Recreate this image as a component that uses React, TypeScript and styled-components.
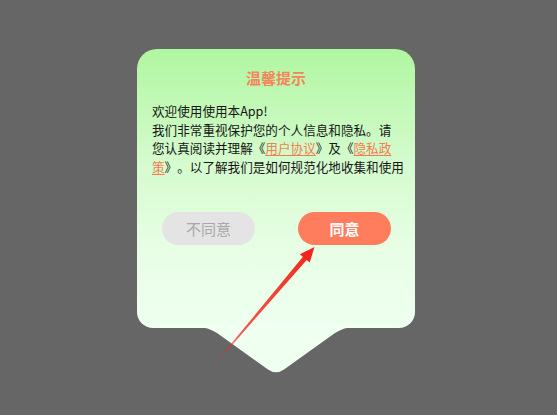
import styled, { createGlobalStyle } from 'styled-components';

const GlobalStyle = createGlobalStyle`
  html, body {
    margin: 0;
    padding: 0;
  }
  body {
    font-family: "Noto Sans CJK SC", "Noto Sans", sans-serif;
  }
`;

const Page = styled.div`
  width: 100vw;
  height: 100vh;
  background: #666666;
  padding: 49px 0 0 137px;
  box-sizing: border-box;
  overflow: hidden;
`;

const Dialog = styled.div`
  position: relative;
  width: 278px;
  display: flex;
  flex-direction: column;
`;

const Card = styled.div`
  height: 279px;
  border-radius: 20px 20px 16px 16px;
  background: linear-gradient(180deg, #b0f6a0 0%, #d4fbcd 40%, #e7fee4 70%, #effff0 100%);
  display: flex;
  flex-direction: column;
`;

const Title = styled.h2`
  margin: 19px 0 0;
  text-align: center;
  font-size: 15px;
  line-height: 20px;
  font-weight: 700;
  color: #f5855c;
`;

const Body = styled.div`
  margin-top: 14px;
  padding-left: 15px;
  font-size: 12.6px;
  line-height: 18.5px;
  color: #161616;
  text-spacing-trim: space-all;
  font-feature-settings: normal;
`;

const Line = styled.div`
  white-space: nowrap;
`;

const LinkText = styled.span`
  color: #f57c52;
  text-decoration: underline;
  text-underline-offset: 2px;
`;

const Actions = styled.div`
  margin-top: 36px;
  padding: 0 24px 0 25px;
  display: flex;
  justify-content: space-between;
`;

const Button = styled.button<{ $primary?: boolean }>`
  width: 93px;
  height: 33px;
  border: none;
  border-radius: 17px;
  padding: 0;
  font-family: inherit;
  font-size: 15px;
  font-weight: ${({ $primary }) => ($primary ? 700 : 400)};
  background: ${({ $primary }) => ($primary ? '#ff7c5d' : '#e4e4e4')};
  color: ${({ $primary }) => ($primary ? '#ffffff' : '#a8a8a8')};
`;

const Pointer = styled.svg`
  display: block;
  margin-top: -1px;
`;

const ArrowLayer = styled.svg`
  position: absolute;
  left: 0;
  top: 0;
  pointer-events: none;
`;

// red annotation arrow: tail (74.5,319) -> tip (177.5,198)
const tail = { x: 74.5, y: 319 };
const tip = { x: 177.5, y: 198 };
const dx = tip.x - tail.x;
const dy = tip.y - tail.y;
const len = Math.hypot(dx, dy);
const ux = dx / len;
const uy = dy / len;
const nx = -uy;
const ny = ux;
const base = { x: tip.x - 15 * ux, y: tip.y - 15 * uy };
const pt = (x: number, y: number) => `${x.toFixed(1)},${y.toFixed(1)}`;

const shaft = [
  pt(tail.x + 0.3 * nx, tail.y + 0.3 * ny),
  pt(base.x + 2.5 * nx + 2 * ux, base.y + 2.5 * ny + 2 * uy),
  pt(base.x - 2.5 * nx + 2 * ux, base.y - 2.5 * ny + 2 * uy),
  pt(tail.x - 0.3 * nx, tail.y - 0.3 * ny),
].join(' ');

const head = [
  pt(tip.x, tip.y),
  pt(base.x + 6.5 * nx, base.y + 6.5 * ny),
  pt(base.x - 6.5 * nx, base.y - 6.5 * ny),
].join(' ');

const App = () => {
  return (
    <>
      <GlobalStyle />
      <Page>
        <Dialog>
          <Card>
            <Title>温馨提示</Title>
            <Body>
              <Line>欢迎使用使用本App!</Line>
              <Line>我们非常重视保护您的个人信息和隐私。请</Line>
              <Line>
                您认真阅读并理解《<LinkText>用户协议</LinkText>》及《<LinkText>隐私政</LinkText>
              </Line>
              <Line>
                <LinkText>策</LinkText>》。以了解我们是如何规范化地收集和使用
              </Line>
            </Body>
            <Actions>
              <Button>不同意</Button>
              <Button $primary>同意</Button>
            </Actions>
          </Card>
          <Pointer width="278" height="48" viewBox="0 0 278 48">
            <path
              d="M60 0 Q71 0 80 6 L131 42.5 Q139 48 147 42.5 L198 6 Q207 0 218 0 Z"
              fill="#effff0"
            />
          </Pointer>
          <ArrowLayer width="278" height="330" viewBox="0 0 278 330">
            <defs>
              <linearGradient
                id="arrowFade"
                gradientUnits="userSpaceOnUse"
                x1={tail.x}
                y1={tail.y}
                x2={tip.x}
                y2={tip.y}
              >
                <stop offset="0" stopColor="#f2261c" stopOpacity="0" />
                <stop offset="0.25" stopColor="#f2261c" stopOpacity="0.75" />
                <stop offset="1" stopColor="#f2261c" stopOpacity="1" />
              </linearGradient>
            </defs>
            <polygon points={shaft} fill="url(#arrowFade)" />
            <polygon points={head} fill="#f2261c" />
          </ArrowLayer>
        </Dialog>
      </Page>
    </>
  );
};

export default App;
